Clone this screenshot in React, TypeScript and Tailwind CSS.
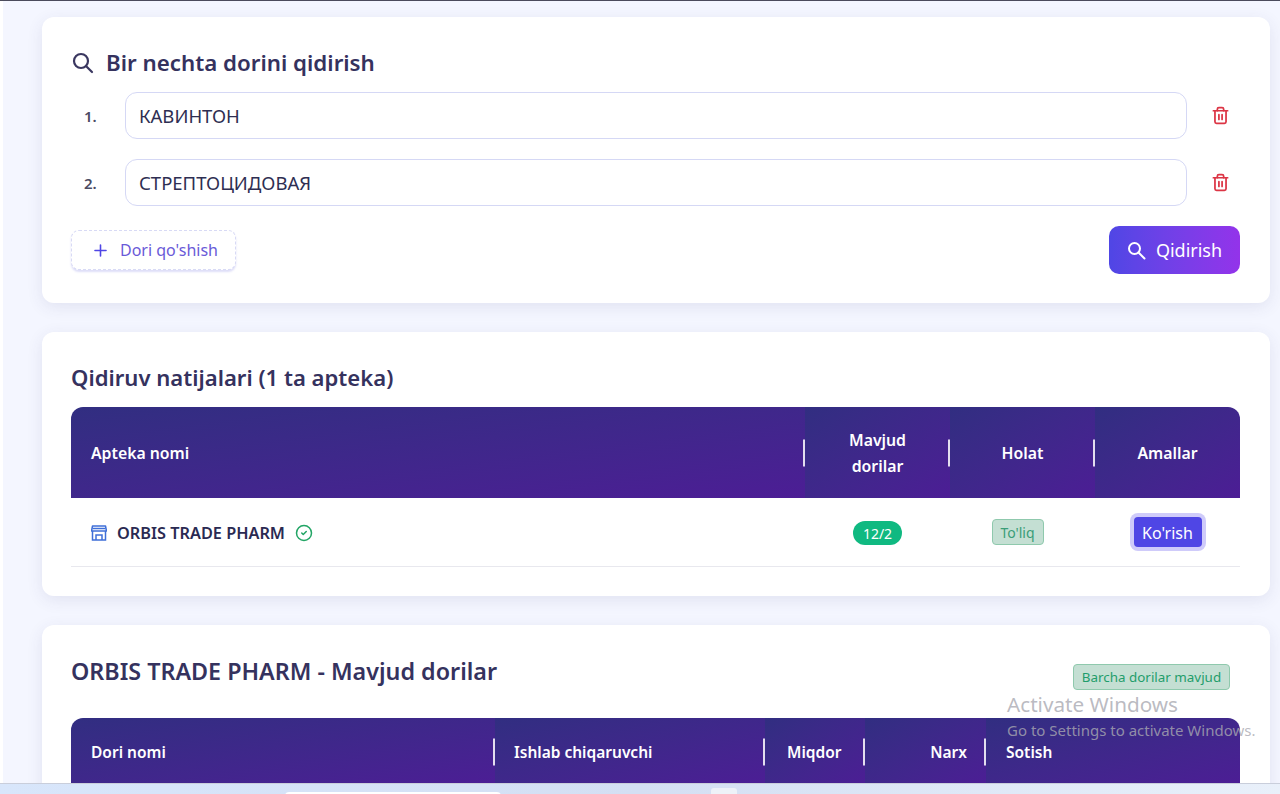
import { CircleCheck, Plus, Trash2 } from "lucide-react";

const headCell =
  "relative flex items-center bg-gradient-to-br from-[#312e81] to-[#4c1d95] text-white font-semibold leading-[26px]";

function Sep() {
  return <span className="absolute right-0 top-1/2 h-[27px] w-[2px] -translate-y-1/2 bg-white/85" />;
}

function SearchIcon({ size, r, c, from, to, width }: { size: number; r: number; c: number; from: number; to: number; width: number }) {
  return (
    <svg width={size} height={size} viewBox={`0 0 ${size} ${size}`} fill="none" stroke="currentColor" strokeWidth={width} strokeLinecap="round" className="shrink-0">
      <circle cx={c} cy={c} r={r} />
      <line x1={from} y1={from} x2={to} y2={to} />
    </svg>
  );
}

function StoreIcon() {
  return (
    <svg width="16" height="16" viewBox="0 0 16 16" fill="none" stroke="#3f6fd8" strokeWidth="1.5" className="shrink-0">
      <path d="M1.5 1h13l1 5H.5z" strokeLinejoin="round" />
      <path d="M1.5 6v9h13V6" />
      <path d="M5 15v-5h6v5" />
      <path d="M1.5 3.5h13" />
    </svg>
  );
}

function DrugRow({ n, value }: { n: number; value: string }) {
  return (
    <div className="flex items-center">
      <div className="w-[54px] pl-[13px] pt-[1px] text-[15px] font-semibold text-[#4b4b63]">{n}.</div>
      <div className="flex h-[47px] flex-1 items-center rounded-[12px] border border-[#d5d8f5] bg-white px-[13px] text-[18.5px] text-[#2e2e52]">
        {value}
      </div>
      <div className="flex w-[53px] justify-end pr-[10px]">
        <Trash2 size={19} strokeWidth={2.2} className="text-[#dc3545]" />
      </div>
    </div>
  );
}

export default function App() {
  return (
    <div className="relative h-[794px] w-full overflow-hidden border-t border-[#4b4b5c] bg-[#f4f6ff] font-['Noto_Sans',sans-serif]">
      <div className="absolute inset-y-0 left-0 w-[3px] bg-white" />
      <div className="flex flex-col gap-[29px] pl-[42px] pr-[10px] pt-[16px]">
        <section className="h-[286px] rounded-[12px] bg-white pl-[29px] pr-[30px] pt-[28px] shadow-[0_4px_16px_rgba(60,60,120,0.1)]">
          <div className="flex h-[36px] items-center gap-[12px] pl-[1px] text-[#3a3760]">
            <SearchIcon size={22} c={9} r={7} from={14} to={20} width={2.2} />
            <h2 className="text-[22.3px] font-semibold text-[#35325e]">Bir nechta dorini qidirish</h2>
          </div>
          <div className="mt-[11px] flex flex-col gap-[20px]">
            <DrugRow n={1} value="КАВИНТОН" />
            <DrugRow n={2} value="СТРЕПТОЦИДОВАЯ" />
          </div>
          <div className="mt-[20px] flex items-center justify-between">
            <button className="flex h-[40px] w-[165px] items-center gap-[10px] rounded-[8px] border border-dashed border-[#d8daf5] bg-white pl-[19px] text-[16px] text-[#6a5ad8] shadow-[0_2px_2px_rgba(90,90,220,0.2)]">
              <Plus size={19} strokeWidth={2} className="text-[#4f46e5]" />
              Dori qo'shish
            </button>
            <button className="flex h-[48px] w-[131px] items-center justify-center gap-[10px] rounded-[10px] bg-gradient-to-r from-[#4f46e5] to-[#9333ea] text-[18px] text-white">
              <SearchIcon size={19} c={7.5} r={5.5} from={11.5} to={17.5} width={2} />
              Qidirish
            </button>
          </div>
        </section>

        <section className="h-[264px] rounded-[12px] bg-white pl-[29px] pr-[30px] pt-[28px] shadow-[0_4px_16px_rgba(60,60,120,0.1)]">
          <h2 className="flex h-[36px] items-center text-[22.1px] font-semibold text-[#35325e]">
            Qidiruv natijalari (1 ta apteka)
          </h2>
          <div className="mt-[11px] grid grid-cols-[734px_145px_145px_145px] overflow-hidden rounded-t-[12px] text-[15.8px]">
            <div className={headCell + " h-[91px] pl-[20px]"}>
              Apteka nomi
              <Sep />
            </div>
            <div className={headCell + " justify-center text-center"}>
              Mavjud
              <br />
              dorilar
              <Sep />
            </div>
            <div className={headCell + " justify-center"}>
              Holat
              <Sep />
            </div>
            <div className={headCell + " justify-center"}>Amallar</div>
          </div>
          <div className="grid h-[69px] grid-cols-[734px_145px_145px_145px] items-center border-b border-[#e8e8ee]">
            <div className="flex items-center pl-[20px] pt-[2px]">
              <StoreIcon />
              <span className="ml-[10px] text-[16.3px] font-semibold text-[#2a2a52]">ORBIS TRADE PHARM</span>
              <CircleCheck size={18} className="ml-[10px] text-[#22a565]" />
            </div>
            <div className="flex justify-center pt-[2px]">
              <span className="flex h-[24px] w-[49px] items-center justify-center rounded-full bg-[#10b981] text-[14px] text-white">
                12/2
              </span>
            </div>
            <div className="flex justify-center pr-[10px]">
              <span className="flex h-[26px] w-[52px] items-center justify-center rounded-[4px] border border-[#8fc9ad] bg-[#c4dfd3] text-[14px] text-[#3a9d78]">
                To'liq
              </span>
            </div>
            <div className="flex justify-center">
              <button className="flex h-[30px] w-[68px] items-center justify-center rounded-[4px] bg-[#4f46e5] pt-[1px] text-[16px] text-white shadow-[0_0_0_4px_#cfcbfa]">
                Ko'rish
              </button>
            </div>
          </div>
        </section>

        <section className="h-[300px] rounded-[12px] bg-white pl-[29px] pr-[30px] pt-[28px] shadow-[0_4px_16px_rgba(60,60,120,0.1)]">
          <div className="flex h-[36px] items-center justify-between">
            <h2 className="text-[23.3px] font-semibold text-[#35325e]">ORBIS TRADE PHARM - Mavjud dorilar</h2>
            <span className="mr-[10px] mt-[12px] flex h-[26px] w-[157px] items-center justify-center rounded-[4px] border border-[#8fc9ad] bg-[#c4dfd3] text-[13.4px] text-[#1f9d6b]">
              Barcha dorilar mavjud
            </span>
          </div>
          <div className="mt-[29px] grid grid-cols-[424px_270px_100px_121px_254px] overflow-hidden rounded-t-[12px] text-[15.5px]">
            <div className={headCell + " h-[68px] pl-[20px]"}>
              Dori nomi
              <Sep />
            </div>
            <div className={headCell + " pl-[19px]"}>
              Ishlab chiqaruvchi
              <Sep />
            </div>
            <div className={headCell + " pl-[22px]"}>
              Miqdor
              <Sep />
            </div>
            <div className={headCell + " justify-end pr-[19px]"}>
              Narx
              <Sep />
            </div>
            <div className={headCell + " pl-[20px]"}>Sotish</div>
          </div>
        </section>
      </div>

      {/* windows watermark and taskbar from the original capture */}
      <div className="pointer-events-none absolute left-[1007px] top-[689px] text-[#a9a9b1]/80">
        <div className="text-[20.7px] leading-[28px]">Activate Windows</div>
        <div className="mt-[2px] whitespace-nowrap text-[15px] leading-[20px]">Go to Settings to activate Windows.</div>
      </div>
      <div className="absolute inset-x-0 bottom-0 h-[11px] border-t border-[#c9cedb] bg-gradient-to-r from-[#d8e6fb] via-[#d4dff3] to-[#e9f0fa]">
        <div className="absolute left-[285px] top-[8px] h-[4px] w-[216px] rounded-t-[4px] bg-white" />
        <div className="absolute left-[711px] top-[4px] h-[8px] w-[26px] rounded-t-[3px] bg-[#eef2f8]" />
      </div>
    </div>
  );
}
